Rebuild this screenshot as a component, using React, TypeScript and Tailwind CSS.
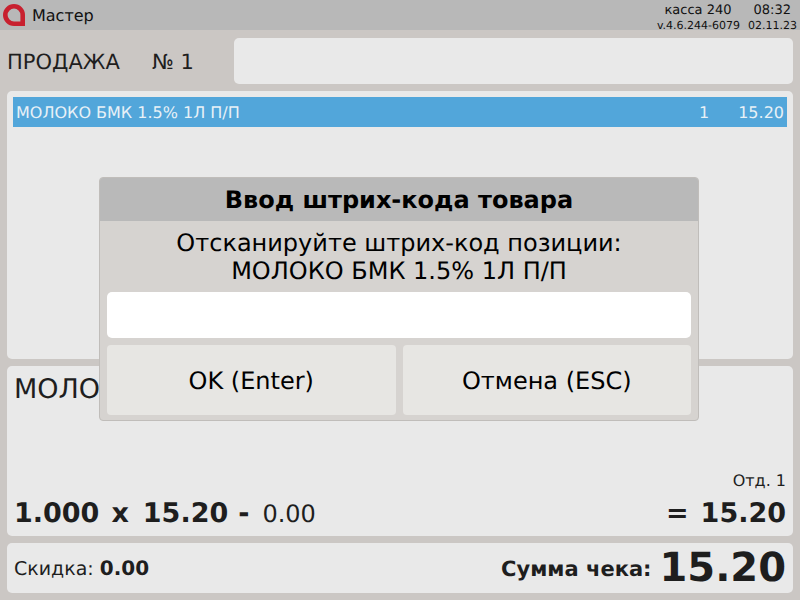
function Logo() {
  return (
    <svg width="22" height="22" viewBox="0 0 22 22" className="shrink-0">
      <path d="M11 2.300A8.700 8.700 0 0 0 11 19.700H19.700V11A8.700 8.700 0 0 0 11 2.300z" fill="none" stroke="#c8202f" strokeWidth="4.600" />
    </svg>
  );
}

function Header() {
  return (
    <div className="flex h-[30px] items-center justify-between bg-[#b8b8b8] pl-[3px] pr-[3px]">
      <div className="flex items-center gap-[7px]">
        <Logo />
        <span className="pt-[2px] text-[16px] text-[#111]">Мастер</span>
      </div>
      <div className="flex flex-col pt-[5px] text-[#111]">
        <div className="flex justify-end gap-[22px] pr-[6px] text-[13px] leading-[16px]">
          <span>касса 240</span>
          <span>08:32</span>
        </div>
        <div className="flex justify-end gap-[8px] text-[11px] leading-[14px]">
          <span>v.4.6.244-6079</span>
          <span>02.11.23</span>
        </div>
      </div>
    </div>
  );
}

function Dialog() {
  return (
    <div className="absolute left-[99px] top-[177px] flex h-[244px] w-[600px] flex-col overflow-hidden rounded-[4px] border border-[#c0bdba] bg-[#d6d3d0]">
      <div className="flex h-[43px] shrink-0 items-center justify-center bg-[#b9b9b9] pt-[1px] text-[24px] font-bold text-black">
        Ввод штрих-кода товара
      </div>
      <div className="flex h-[71px] shrink-0 flex-col justify-center text-center text-[24px] leading-[28px] text-black">
        <div>Отсканируйте штрих-код позиции:</div>
        <div>МОЛОКО БМК 1.5% 1Л П/П</div>
      </div>
      <div className="mx-[7px] h-[46px] shrink-0 rounded-[5px] bg-white" />
      <div className="mx-[7px] mt-[7px] flex h-[70px] shrink-0 gap-[7px]">
        <div className="flex flex-1 items-center justify-center rounded-[4px] bg-[#e7e6e3] pt-[2px] text-[24px] text-black">OK (Enter)</div>
        <div className="flex flex-1 items-center justify-center rounded-[4px] bg-[#e7e6e3] pt-[2px] text-[24px] text-black">Отмена (ESC)</div>
      </div>
    </div>
  );
}

export default function App() {
  return (
    <div className="relative flex h-[600px] w-[800px] flex-col overflow-hidden bg-[#cbc7c4] text-[#1e1e1e] font-['DejaVu_Sans',sans-serif] [text-rendering:geometricPrecision]">
      <Header />

      <div className="mt-[8px] flex h-[46px] items-center pl-[7px] pr-[7px]">
        <span className="w-[145px] pt-[3px] text-[21px]">ПРОДАЖА</span>
        <span className="w-[82px] pt-[3px] text-[21px]">№ 1</span>
        <div className="h-full flex-1 rounded-[5px] bg-[#e9e9e9]" />
      </div>

      <div className="mx-[7px] mt-[7px] h-[268px] rounded-[5px] bg-[#e9e9e9] p-[6px]">
        <div className="flex h-[30px] items-center justify-between bg-[#52a6da] pl-[3px] pr-[3px] pt-[2px] text-[16px] text-[#e8f1f7]">
          <span>МОЛОКО БМК 1.5% 1Л П/П</span>
          <div className="flex">
            <span>1</span>
            <span className="ml-[29px]">15.20</span>
          </div>
        </div>
      </div>

      <div className="mx-[7px] mt-[7px] flex h-[170px] flex-col rounded-[5px] bg-[#e9e9e9] px-[7px]">
        <div className="mt-[7px] text-[27px] leading-[34px]">МОЛОКО БМК 1.5% 1Л П/П</div>
        <div className="mt-auto text-right text-[16px] leading-[18px]">Отд. 1</div>
        <div className="mb-[4px] mt-[6px] flex h-[36px] items-center justify-between text-[27px]">
          <div className="flex items-center">
            <b>1.000</b>
            <b className="ml-[12px]">x</b>
            <b className="ml-[14px]">15.20</b>
            <b className="ml-[10px]">-</b>
            <span className="ml-[13px] text-[24px]">0.00</span>
          </div>
          <div className="flex items-center gap-[12px]">
            <b>=</b>
            <b>15.20</b>
          </div>
        </div>
      </div>

      <div className="mx-[7px] mt-[7px] flex h-[50px] items-center justify-between rounded-[5px] bg-[#e9e9e9] px-[7px]">
        <div className="text-[19px]">
          Скидка: <b className="text-[20px]">0.00</b>
        </div>
        <div className="flex items-center gap-[8px]">
          <b className="pt-[3px] text-[21px]">Сумма чека:</b>
          <b className="text-[40px] leading-[50px]">15.20</b>
        </div>
      </div>

      <Dialog />
    </div>
  );
}
